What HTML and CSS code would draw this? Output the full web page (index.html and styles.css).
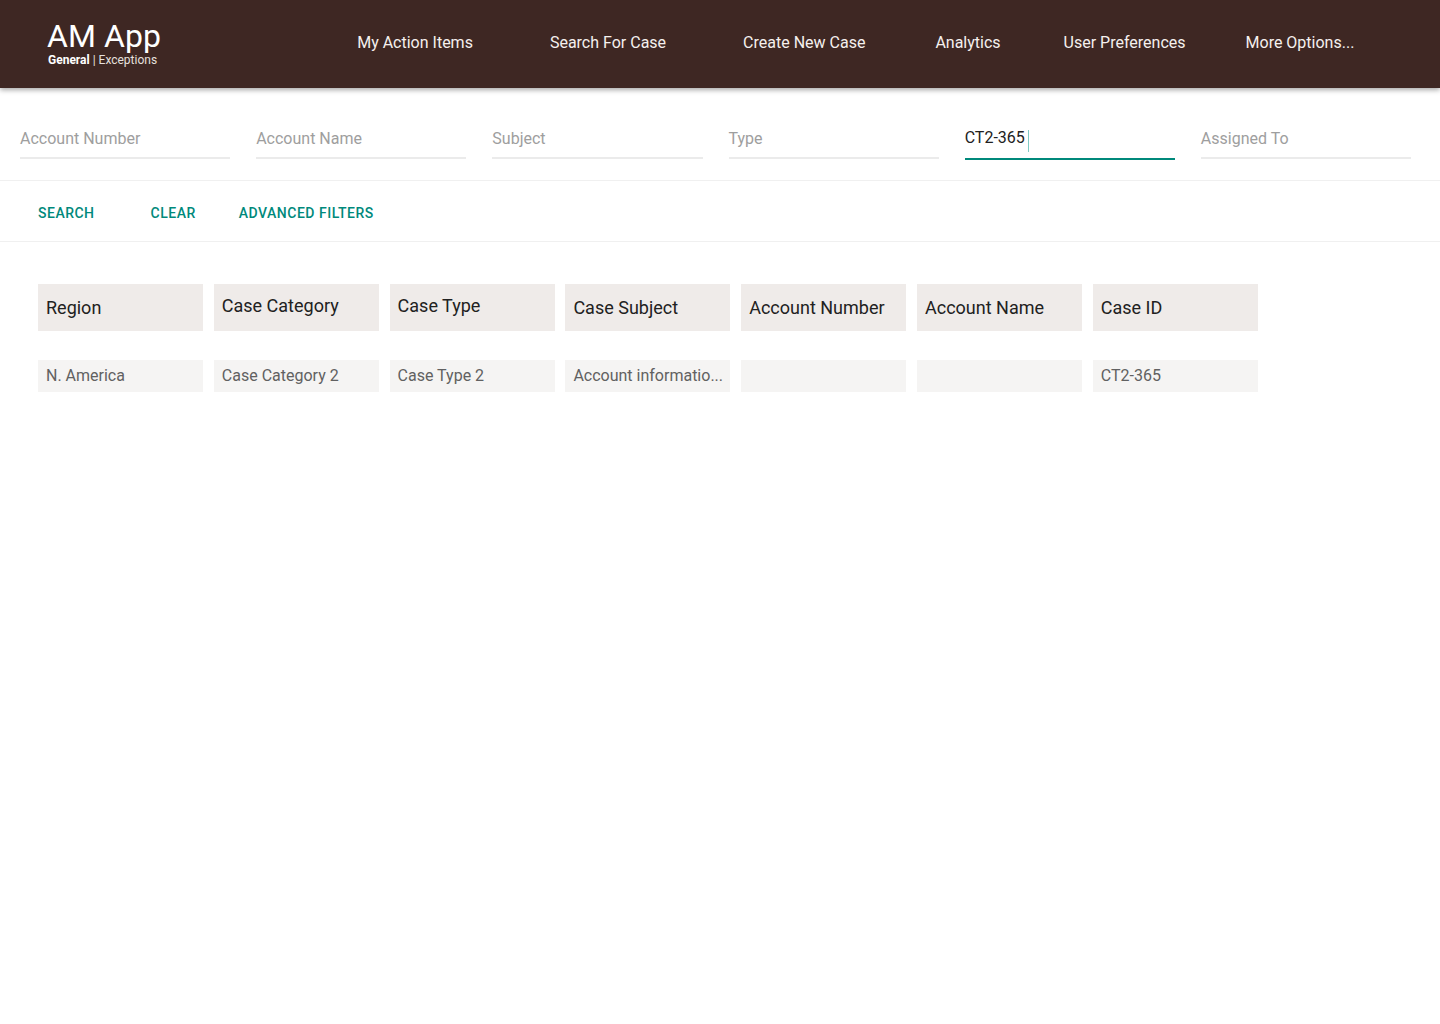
FILE: index.html
```html
<!DOCTYPE html>
<html lang="en">
<head>
<meta charset="utf-8">
<title>AM App</title>
<link rel="stylesheet" href="styles.css">
</head>
<body>
<header class="topbar">
  <div class="brand">
    <div class="brand-title">AM App</div>
    <div class="brand-sub"><b>General</b> | Exceptions</div>
  </div>
  <nav class="nav">
    <a class="nav-item">My Action Items</a>
    <a class="nav-item">Search For Case</a>
    <a class="nav-item">Create New Case</a>
    <a class="nav-item">Analytics</a>
    <a class="nav-item">User Preferences</a>
    <a class="nav-item">More Options...</a>
  </nav>
</header>

<section class="filters">
  <div class="field"><span class="placeholder">Account Number</span></div>
  <div class="field"><span class="placeholder">Account Name</span></div>
  <div class="field"><span class="placeholder">Subject</span></div>
  <div class="field"><span class="placeholder">Type</span></div>
  <div class="field field-active"><span class="value">CT2-365</span><span class="caret"></span></div>
  <div class="field"><span class="placeholder">Assigned To</span></div>
</section>

<section class="actions">
  <button class="btn btn-search">SEARCH</button>
  <button class="btn btn-clear">CLEAR</button>
  <button class="btn btn-adv">ADVANCED FILTERS</button>
</section>

<section class="results">
  <div class="grid">
    <div class="th th-low">Region</div>
    <div class="th">Case Category</div>
    <div class="th">Case Type</div>
    <div class="th th-low">Case Subject</div>
    <div class="th th-low">Account Number</div>
    <div class="th th-low">Account Name</div>
    <div class="th th-low">Case ID</div>

    <div class="td">N. America</div>
    <div class="td">Case Category 2</div>
    <div class="td">Case Type 2</div>
    <div class="td">Account informatio...</div>
    <div class="td"></div>
    <div class="td"></div>
    <div class="td">CT2-365</div>
  </div>
</section>
</body>
</html>
```

FILE: styles.css
```css
* { box-sizing: border-box; }

html, body {
  margin: 0;
  padding: 0;
  background: #ffffff;
  font-family: Roboto, "Liberation Sans", Arial, sans-serif;
}

.topbar {
  height: 88px;
  background: #3e2723;
  display: flex;
  align-items: flex-start;
  padding-left: 47px;
  box-shadow: 0 2px 5px rgba(0, 0, 0, 0.35);
  position: relative;
  z-index: 2;
}

.brand {
  padding-top: 17px;
  color: #ffffff;
}

.brand-title {
  font-size: 32px;
  line-height: 38px;
  font-weight: 400;
  letter-spacing: 0.1px;
}

.brand-sub {
  font-size: 12px;
  line-height: 13px;
  margin-top: -1px;
  margin-left: 1px;
  color: #e6e0de;
}

.brand-sub b {
  color: #ffffff;
  font-weight: 700;
}

.nav {
  display: flex;
  align-items: center;
  height: 86px;
  margin-left: 196px;
}

.nav-item {
  color: #f5f0ee;
  font-size: 16px;
  line-height: 20px;
  white-space: nowrap;
}

.nav-item:nth-child(2) { margin-left: 77px; }
.nav-item:nth-child(3) { margin-left: 77px; }
.nav-item:nth-child(4) { margin-left: 70px; }
.nav-item:nth-child(5) { margin-left: 63px; }
.nav-item:nth-child(6) { margin-left: 60px; }

.filters {
  display: grid;
  grid-template-columns: repeat(6, 1fr);
  column-gap: 26px;
  padding: 41px 29px 20px 20px;
  border-bottom: 1px solid #f0f0f0;
}

.field {
  height: 30px;
  padding-bottom: 9px;
  border-bottom: 2px solid #ebebeb;
  display: flex;
  align-items: flex-start;
  font-size: 16px;
  line-height: 20px;
}

.placeholder {
  color: #9e9e9e;
}

.field-active {
  height: 31px;
  border-bottom: 2px solid #00897b;
}

.value {
  color: #212121;
  margin-top: -1px;
}

.caret {
  display: block;
  width: 1px;
  height: 22px;
  margin-left: 3px;
  margin-top: 1px;
  background: #80cbc4;
}

.actions {
  display: flex;
  align-items: center;
  height: 61px;
  padding-left: 38px;
  padding-top: 3px;
  border-bottom: 1px solid #f0f0f0;
}

.btn {
  border: none;
  background: none;
  padding: 0;
  font-family: Roboto, "Liberation Sans", Arial, sans-serif;
  font-size: 14px;
  font-weight: 500;
  letter-spacing: 0.5px;
  color: #00897b;
  line-height: 20px;
  cursor: pointer;
}

.btn-clear { margin-left: 56px; }
.btn-adv { margin-left: 43px; }

.results {
  padding: 42px 0 0 38px;
}

.grid {
  display: grid;
  grid-template-columns: repeat(7, 165px);
  column-gap: 10.8px;
  row-gap: 29px;
}

.th {
  height: 47px;
  background: #efebe9;
  color: #212121;
  font-size: 18px;
  line-height: 22px;
  padding: 11px 8px 0;
  white-space: nowrap;
  overflow: hidden;
}

.th-low {
  padding-top: 13px;
}

.td {
  height: 32px;
  background: #f5f4f3;
  color: #616161;
  font-size: 16px;
  line-height: 20px;
  padding: 6px 8px 0;
  white-space: nowrap;
  overflow: hidden;
}
```
